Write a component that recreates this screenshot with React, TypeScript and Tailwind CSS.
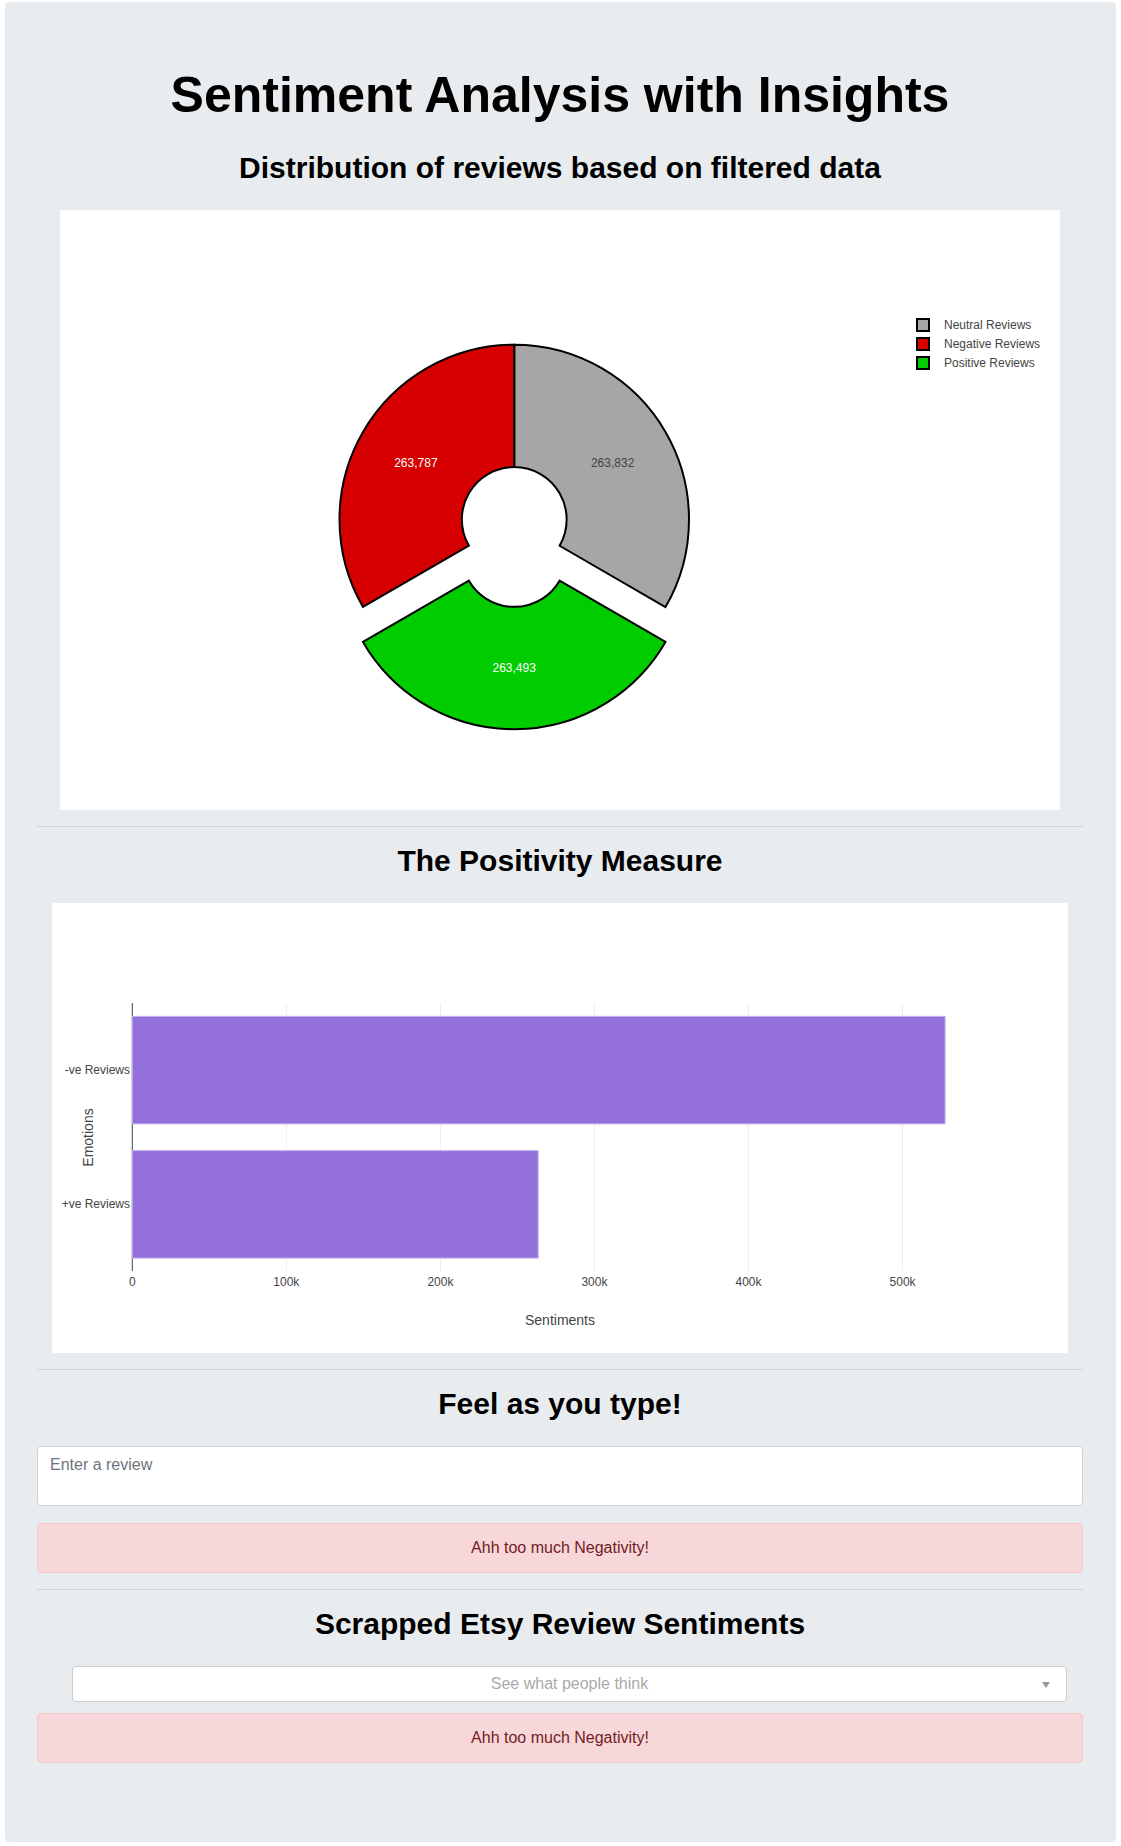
import React from "react";

const total = 263832 + 263787 + 263493;

// clockwise from 12 o'clock, in the order they are drawn
const pieSlices = [
  { name: "Neutral Reviews", value: 263832, fill: "#a6a6a6", text: "#444", pull: 0 },
  { name: "Positive Reviews", value: 263493, fill: "#00cc00", text: "#fff", pull: 0.2 },
  { name: "Negative Reviews", value: 263787, fill: "#d60000", text: "#fff", pull: 0 },
];

const legend = [
  { name: "Neutral Reviews", fill: "#a6a6a6" },
  { name: "Negative Reviews", fill: "#d60000" },
  { name: "Positive Reviews", fill: "#00cc00" },
];

function pt(cx: number, cy: number, rad: number, deg: number): [number, number] {
  const a = (deg * Math.PI) / 180;
  return [cx + rad * Math.sin(a), cy - rad * Math.cos(a)];
}

function sector(cx: number, cy: number, R: number, r: number, a0: number, a1: number) {
  const [x0, y0] = pt(cx, cy, R, a0);
  const [x1, y1] = pt(cx, cy, R, a1);
  const [x2, y2] = pt(cx, cy, r, a1);
  const [x3, y3] = pt(cx, cy, r, a0);
  const large = a1 - a0 > 180 ? 1 : 0;
  return `M${x0} ${y0}A${R} ${R} 0 ${large} 1 ${x1} ${y1}L${x2} ${y2}A${r} ${r} 0 ${large} 0 ${x3} ${y3}Z`;
}

function PieChart() {
  const cx = 454.25;
  const cy = 309.5;
  const R = 174.75;
  const r = 52.4;
  let start = 0;
  const parts = pieSlices.map((s) => {
    const sweep = (s.value / total) * 360;
    const a0 = start;
    const a1 = start + sweep;
    start = a1;
    const mid = (a0 + a1) / 2;
    const [ox, oy] = pt(0, 0, s.pull * R, mid);
    const [tx, ty] = pt(cx + ox, cy + oy, (R + r) / 2, mid);
    return { ...s, d: sector(cx + ox, cy + oy, R, r, a0, a1), tx, ty };
  });

  return (
    <svg width="1000" height="600" viewBox="0 0 1000 600" fontFamily="'Liberation Sans', Arial, sans-serif">
      {parts.map((p) => (
        <path key={p.name} d={p.d} fill={p.fill} stroke="#000" strokeWidth="2" strokeLinejoin="miter" />
      ))}
      {parts.map((p) => (
        <text key={p.name + "t"} x={p.tx} y={p.ty + 4} fontSize="12" fill={p.text} textAnchor="middle">
          {p.value.toLocaleString("en-US")}
        </text>
      ))}
      {legend.map((l, i) => {
        const y = 115 + i * 19;
        return (
          <g key={l.name}>
            <rect x="857" y={y - 6} width="12" height="12" fill={l.fill} stroke="#000" strokeWidth="2" />
            <text x="884" y={y + 4} fontSize="12" fill="#444">
              {l.name}
            </text>
          </g>
        );
      })}
    </svg>
  );
}

function BarChart() {
  const x0 = 80.3;
  const per100k = 154.05;
  const sx = (v: number) => x0 + (v / 100000) * per100k;
  const ticks = [0, 100000, 200000, 300000, 400000, 500000];
  const bars = [
    { label: "-ve Reviews", value: 527619, y: 113.4 },
    { label: "+ve Reviews", value: 263493, y: 247.6 },
  ];

  return (
    <svg width="1016" height="450" viewBox="0 0 1016 450" fontFamily="'Liberation Sans', Arial, sans-serif">
      {ticks.slice(1).map((t) => (
        <line key={t} x1={sx(t)} x2={sx(t)} y1="100" y2="368" stroke="#eee" strokeWidth="1" />
      ))}
      <line x1={x0} x2={x0} y1="100" y2="368" stroke="#444" strokeWidth="1" />
      {bars.map((b) => (
        <g key={b.label}>
          <rect x={x0} y={b.y} width={sx(b.value) - x0} height="107.5" fill="#9370db" stroke="#c4b3ef" strokeWidth="1" />
          <text x="78" y={b.y + 53.75 + 4} fontSize="12" fill="#444" textAnchor="end">
            {b.label}
          </text>
        </g>
      ))}
      {ticks.map((t) => (
        <text key={"l" + t} x={sx(t)} y="383" fontSize="12" fill="#444" textAnchor="middle">
          {t === 0 ? "0" : `${t / 1000}k`}
        </text>
      ))}
      <text x="508" y="422" fontSize="14" fill="#444" textAnchor="middle">
        Sentiments
      </text>
      <text x="0" y="0" fontSize="14" fill="#444" textAnchor="middle" transform="translate(41 234.5) rotate(-90)">
        Emotions
      </text>
    </svg>
  );
}

function Alert() {
  return (
    <div className="mb-[16px] rounded-[4px] border border-[#f5c6cb] bg-[#f8d7da] px-[20px] py-[12px] text-center text-[16px] leading-[24px] text-[#721c24]">
      Ahh too much Negativity!
    </div>
  );
}

export default function App() {
  return (
    <div className="min-h-screen bg-white pt-[2px] pb-[4px] px-[5px] font-['Liberation_Sans',Arial,sans-serif]">
      <div className="rounded-[4px] bg-[#e9ecef] pl-[32px] pr-[33px] pt-[65px] pb-[63px]">
        <h1 className="text-center text-[50px] font-bold leading-[57px] text-black">Sentiment Analysis with Insights</h1>
        <h2 className="mt-[27px] mb-[25px] text-center text-[30px] font-bold leading-[34px] text-black">
          Distribution of reviews based on filtered data
        </h2>
        <div className="mx-auto h-[600px] w-[1000px] bg-white">
          <PieChart />
        </div>

        <hr className="mt-[16px] border-0 border-t border-[#d1d4d7]" />
        <h2 className="mt-[17px] mb-[25px] text-center text-[30px] font-bold leading-[34px] text-black">The Positivity Measure</h2>
        <div className="mx-auto h-[450px] w-[1016px] bg-white">
          <BarChart />
        </div>

        <hr className="mt-[16px] border-0 border-t border-[#d1d4d7]" />
        <h2 className="mt-[17px] mb-[25px] text-center text-[30px] font-bold leading-[34px] text-black">Feel as you type!</h2>
        <textarea
          placeholder="Enter a review"
          className="mb-[17px] block h-[60px] w-full resize-none rounded-[4px] border border-[#ced4da] bg-white px-[12px] py-[6px] text-[16px] leading-[24px] text-[#495057] placeholder:text-[#6c757d] outline-none"
        />
        <Alert />

        <hr className="border-0 border-t border-[#d1d4d7]" />
        <h2 className="mt-[17px] mb-[25px] text-center text-[30px] font-bold leading-[34px] text-black">
          Scrapped Etsy Review Sentiments
        </h2>
        <div className="mb-[11px] ml-[35px] mr-[16px] flex h-[36px] items-center rounded-[4px] border border-[#ccc] bg-white">
          <div className="flex-1 pl-[30px] text-center text-[16px] text-[#aaa]">See what people think</div>
          <div className="flex w-[30px] justify-center pr-[10px] pt-[2px]">
            <div className="h-0 w-0 border-x-[4px] border-t-[6px] border-x-transparent border-t-[#999]" />
          </div>
        </div>
        <Alert />
      </div>
    </div>
  );
}
